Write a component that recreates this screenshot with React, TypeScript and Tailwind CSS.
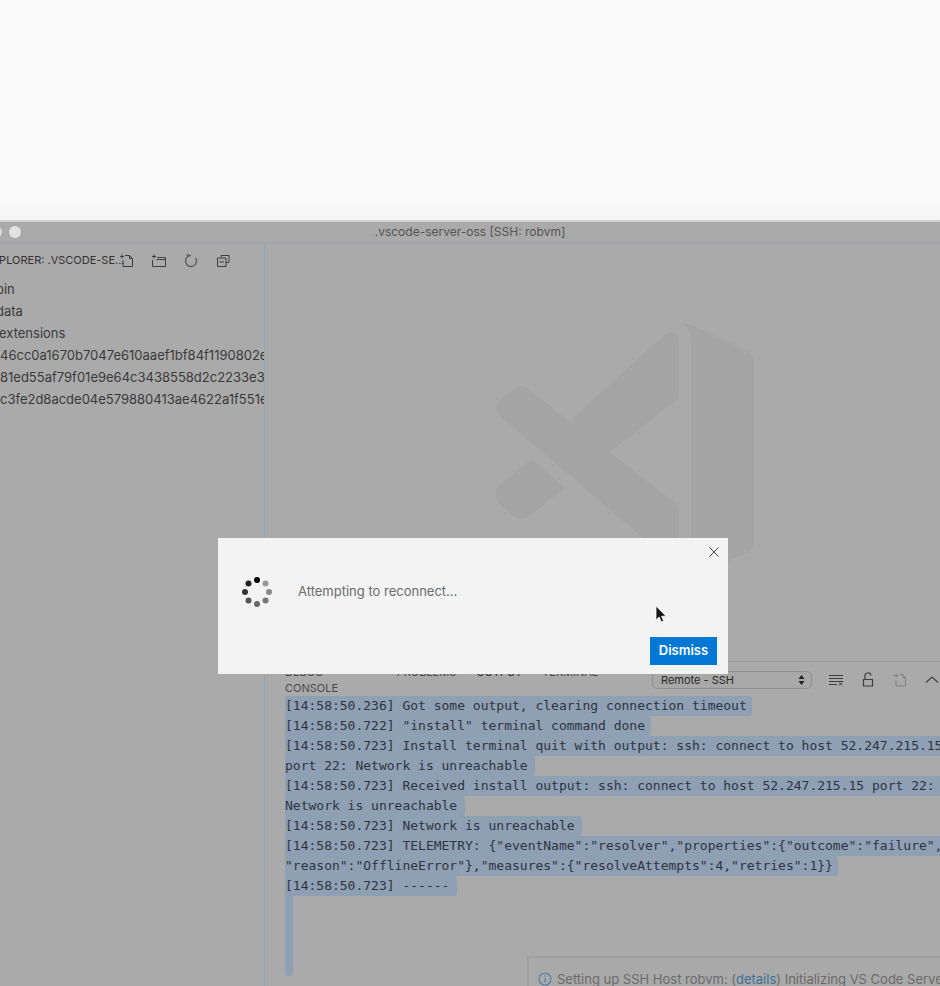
import React from "react";

const sans = "font-['Inter','Liberation_Sans',sans-serif]";

const outputLines = [
  { text: "[14:58:50.236] Got some output, clearing connection timeout", width: "w-[467px]" },
  { text: '[14:58:50.722] "install" terminal command done', width: "w-[366px]" },
  { text: "[14:58:50.723] Install terminal quit with output: ssh: connect to host 52.247.215.15", width: "w-[700px]" },
  { text: "port 22: Network is unreachable", width: "w-[250px]" },
  { text: "[14:58:50.723] Received install output: ssh: connect to host 52.247.215.15 port 22:", width: "w-[700px]" },
  { text: "Network is unreachable", width: "w-[180px]" },
  { text: "[14:58:50.723] Network is unreachable", width: "w-[297px]" },
  { text: '[14:58:50.723] TELEMETRY: {"eventName":"resolver","properties":{"outcome":"failure",', width: "w-[700px]" },
  { text: '"reason":"OfflineError"},"measures":{"resolveAttempts":4,"retries":1}}', width: "w-[553px]" },
  { text: "[14:58:50.723] ------", width: "w-[172px]" },
];

const files = [
  { name: "bin", cls: "-ml-[4px]" },
  { name: "data", cls: "-ml-[4px]" },
  { name: "extensions", cls: "-ml-[1px]" },
  { name: "46cc0a1670b7047e610aaef1bf84f1190802e", cls: "ml-0" },
  { name: "81ed55af79f01e9e64c3438558d2c2233e3", cls: "ml-0" },
  { name: "c3fe2d8acde04e579880413ae4622a1f551e", cls: "ml-0" },
];

const spinnerDots = [
  { x: 15, y: 3, fill: "#000000" },
  { x: 23.5, y: 6.5, fill: "#999999" },
  { x: 27, y: 15, fill: "#888888" },
  { x: 23.5, y: 23.5, fill: "#777777" },
  { x: 15, y: 27, fill: "#666666" },
  { x: 6.5, y: 23.5, fill: "#555555" },
  { x: 3, y: 15, fill: "#333333" },
  { x: 6.5, y: 6.5, fill: "#222222" },
];

function ToolIcon({ children, w = 16 }: { children: React.ReactNode; w?: number }) {
  return (
    <svg width={w} height="16" viewBox="0 0 16 16" fill="none" stroke="#3f3f3f" strokeWidth="1" className="shrink-0">
      {children}
    </svg>
  );
}

function Watermark() {
  return (
    <svg width="260" height="256" viewBox="0 0 260 256" fill="#a4a4a4">
      <path d="M168 12 Q175 6 180 9 Q184 12 184 18 L184 74 L115 128 L75 97 Z" />
      <path d="M20 64 Q26 60 32 64 L184 182 L184 245 L5 92 Q-2 84 3 78 Z" />
      <path d="M37 135 L70 164 L33 193 Q25 197 18 192 L3 178 Q-2 170 3 162 Z" />
      <path d="M187 0 L195 0 L252 27 Q259 31 259 38 L259 218 Q259 225 252 229 L196 254 L196 20 Q196 4 187 0 Z" />
    </svg>
  );
}

export default function App() {
  return (
    <div className={`relative h-[986px] w-[940px] overflow-hidden bg-[#aaaaaa] ${sans}`}>
      <div className="h-[222px] bg-gradient-to-b from-[#fafafa] from-[90%] to-[#f4f4f4] border-b-2 border-[#d2d2d2]" />

      <div className="relative flex h-[21px] items-center justify-center border-b border-[#a0a5ad] text-[12px] text-[#555555]">
        <span className="absolute -left-[10px] top-[4px] h-[12px] w-[12px] rounded-full bg-[#dddddd]" />
        <span className="absolute left-[9px] top-[4px] h-[12px] w-[12px] rounded-full bg-[#e2e2e2]" />
        <span className="ml-[0px]">.vscode-server-oss [SSH: robvm]</span>
      </div>

      <div className="flex h-[743px]">
        <aside className="w-[265px] shrink-0 overflow-hidden border-r border-[#9aa5b4]">
          <div className="flex h-[35px] items-center text-[11px] text-[#333333]">
            <span className="-ml-[15px] w-[135px] whitespace-nowrap">EXPLORER: .VSCODE-SE...</span>
            <span className="ml-[-1px] flex gap-[16px]">
              <ToolIcon>
                <path d="M1 3.5H5M3 1.5V5.5M6 2.5H10.5L13.5 5.5V13.5H4V7M10.5 2.5V5.5H13.5" />
              </ToolIcon>
              <ToolIcon>
                <path d="M1 3.5H5M3 1.5V5.5M6 4.5H14.5V13.5H1.5V7M5.5 6.5H14.5" />
              </ToolIcon>
              <ToolIcon>
                <path d="M12.5 4.8A5.5 5.5 0 1 1 8 2.5H6M5.5 1L4 2.5L5.5 4" stroke="#555555" strokeWidth="1.2" />
              </ToolIcon>
              <ToolIcon>
                <path d="M6 4V2.5H14V9.5H11M2.5 5H11V13.5H2.5ZM4.5 9H9" />
              </ToolIcon>
            </span>
          </div>
          <ul className="mt-[0px] text-[13px] leading-[22px] text-[#3a3a3a]">
            {files.map((file) => (
              <li key={file.name} className={`h-[22px] whitespace-nowrap ${file.cls}`}>
                {file.name}
              </li>
            ))}
          </ul>
        </aside>

        <main className="flex min-w-0 flex-1 flex-col">
          <div className="h-[418px] overflow-hidden pl-[230px] pt-[81px]">
            <Watermark />
          </div>

          <section className="relative flex-1 border-t border-[#9c9c9c]">
            <div className="flex h-[34px] items-center pl-[20px] pt-[2px]">
              <div className="flex gap-[20px] text-[11px] text-[#4a4a4a]">
                <span>DEBUG CONSOLE</span>
                <span>PROBLEMS</span>
                <span className="text-[#2d2d2d]">OUTPUT</span>
                <span>TERMINAL</span>
              </div>
              <div className="ml-[54px] flex h-[18px] w-[160px] shrink-0 items-center justify-between rounded-[5px] border border-[#8f8f8f] bg-[#a8a8a8] pl-[8px] pr-[6px] text-[11px] text-[#2a2a2a]">
                <span>Remote - SSH</span>
                <svg width="7" height="12" viewBox="0 0 7 12" fill="#222222">
                  <path d="M3.5 1L6.5 5H0.5ZM3.5 11L0.5 7H6.5Z" />
                </svg>
              </div>
              <div className="ml-[16px] flex shrink-0 gap-[16px]">
                <ToolIcon>
                  <path d="M1 3.5H15M1 6.5H15M1 9.5H15M1 12.5H9M11 10.5L14 13.5M14 10.5L11 13.5" />
                </ToolIcon>
                <ToolIcon>
                  <path d="M3.5 7.5H12.5V14H3.5ZM5 7.5V4.5A3 3 0 0 1 11 3.5" strokeWidth="1.2" />
                </ToolIcon>
                <ToolIcon>
                  <path d="M1 3.5H6M4 1.5L6 3.5L4 5.5M8 2.5H10.5L13.5 5.5V14H4V8M10.5 2.5V5.5H13.5" stroke="#7f7f7f" />
                </ToolIcon>
                <ToolIcon>
                  <path d="M2 10.5L8 5L14 10.5" strokeWidth="1.2" />
                </ToolIcon>
              </div>
            </div>

            <div className="ml-[20px] h-[280px] overflow-hidden font-['DejaVu_Sans_Mono','Liberation_Mono',monospace] text-[13px] leading-[20px] text-[#2e3540]">
              <div className="-mt-[0px]">
                {outputLines.map((line, i) => (
                  <div key={i} className={`h-[20px] whitespace-nowrap rounded-r-[3px] bg-[#8f9fb4] ${line.width}`}>
                    {line.text}
                  </div>
                ))}
                <div className="h-[80px] w-[8px] rounded-b-[3px] bg-[#8f9fb4]" />
              </div>
            </div>

            <div className="absolute left-[262px] top-[294px] flex h-[40px] w-[500px] items-start gap-[5px] border-l-2 border-t-2 border-[#a0a0a0] bg-[#a9a9a9] pl-[9px] pt-[13px] text-[13px] leading-[16px] text-[#6b6b6b]">
              <svg width="14" height="14" viewBox="0 0 14 14" fill="none" stroke="#4f7ea8" strokeWidth="1.1" className="mt-[1px] shrink-0">
                <circle cx="7" cy="7" r="6" />
                <path d="M7 6V10.5M7 3.5V4.8" />
              </svg>
              <span className="whitespace-nowrap">
                Setting up SSH Host robvm: (<span className="text-[#3f6f98]">details</span>) Initializing VS Code Server
              </span>
            </div>
          </section>
        </main>
      </div>

      <div className="absolute left-[218px] top-[538px] flex h-[136px] w-[510px] flex-col bg-[#f3f3f3]">
        <div className="flex h-[26px] items-center justify-end pr-[8px] pt-[2px]">
          <svg width="12" height="12" viewBox="0 0 12 12" stroke="#444444" strokeWidth="1">
            <path d="M1.5 1.5L10.5 10.5M10.5 1.5L1.5 10.5" />
          </svg>
        </div>
        <div className="flex items-center pl-[24px] pt-[13px]">
          <svg width="30" height="30" viewBox="0 0 30 30" className="shrink-0">
            {spinnerDots.map((dot) => (
              <circle key={`${dot.x}-${dot.y}`} cx={dot.x} cy={dot.y} r="3" fill={dot.fill} />
            ))}
          </svg>
          <span className="ml-[26px] text-[13px] text-[#6c6c6c]">Attempting to reconnect...</span>
        </div>
        <div className="mt-auto flex justify-end pb-[9px] pr-[11px]">
          <button className="h-[28px] w-[67px] bg-[#0078d4] text-[13px] font-semibold text-white">Dismiss</button>
        </div>
        <svg width="12" height="19" viewBox="0 0 12 19" className="absolute left-[437px] top-[67px]">
          <path d="M1 1V15L4.2 12L6.3 17L8.6 16L6.5 11.2H11Z" fill="#111111" stroke="#ffffff" strokeWidth="0.8" />
        </svg>
      </div>
    </div>
  );
}
